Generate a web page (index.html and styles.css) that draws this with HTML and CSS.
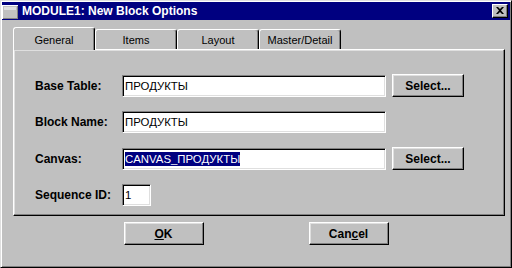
FILE: index.html
```html
<!DOCTYPE html>
<html lang="en">
<head>
    <meta charset="UTF-8">
    <title>MODULE1: New Block Options</title>
    <link rel="stylesheet" href="styles.css">
</head>
<body>
    <div class="window">
        <div class="titlebar">
            <svg class="app-icon" width="16" height="14" viewBox="0 0 16 14">
                <rect x="0" y="0" width="16" height="14" fill="#ffffff"/>
                <rect x="1" y="1" width="15" height="13" fill="#808080"/>
                <rect x="1" y="1" width="14" height="12" fill="#c0c0c0"/>
                <rect x="2" y="2" width="12" height="3" fill="#dfdfdf"/>
            </svg>
            <span class="title">MODULE1: New Block Options</span>
            <div class="close-btn">
                <svg width="8" height="7" viewBox="0 0 8 7">
                    <path d="M0 0h2l2 2 2-2h2L5 3.5 8 7H6L4 5 2 7H0l3-3.5z" fill="#000"/>
                </svg>
            </div>
        </div>

        <div class="tabs">
            <div class="tab active">General</div>
            <div class="tab">Items</div>
            <div class="tab">Layout</div>
            <div class="tab">Master/Detail</div>
        </div>

        <div class="panel">
            <div class="form">
                <div class="label">Base Table:</div>
                <div class="field">ПРОДУКТЫ</div>
                <div class="btn">Select...</div>

                <div class="label">Block Name:</div>
                <div class="field">ПРОДУКТЫ</div>
                <div></div>

                <div class="label">Canvas:</div>
                <div class="field"><span class="selected">CANVAS_ПРОДУКТЫ</span></div>
                <div class="btn">Select...</div>

                <div class="label">Sequence ID:</div>
                <div class="field short">1</div>
                <div></div>
            </div>
        </div>

        <div class="actions">
            <div class="btn wide"><u>O</u>K</div>
            <div class="btn wide">Can<u>c</u>el</div>
        </div>
    </div>
</body>
</html>
```

FILE: styles.css
```css
:root {
    --face: #c0c0c0;
    --light: #dfdfdf;
    --shadow: #808080;
    --navy: #000080;
}

body {
    margin: 0;
    font-family: 'Liberation Sans', Arial, sans-serif;
    background: var(--face);
}

.window {
    width: 512px;
    height: 268px;
    box-sizing: border-box;
    background: var(--face);
    border: 1px solid;
    border-color: var(--light) #000 #000 var(--light);
    box-shadow: inset 1px 1px #fff, inset -1px -1px var(--shadow);
    padding: 1px;
}

.titlebar {
    height: 18px;
    background: var(--navy);
    color: #fff;
    display: flex;
    align-items: center;
    padding: 0 2px 0 0;
}

.app-icon {
    display: block;
    margin-top: 1px;
}

.title {
    margin-left: 4px;
    font-weight: bold;
    font-size: 12px;
}

.close-btn {
    margin-left: auto;
    width: 16px;
    height: 14px;
    box-sizing: border-box;
    background: var(--face);
    border: 1px solid;
    border-color: #fff #000 #000 #fff;
    box-shadow: inset -1px -1px var(--shadow);
    display: flex;
    align-items: center;
    justify-content: center;
}

.close-btn svg {
    display: block;
    margin: 0 1px 1px 0;
}

/* tab strip */
.tabs {
    display: flex;
    align-items: flex-end;
    height: 22px;
    margin: 7px 0 0 11px;
}

.tab {
    width: 82px;
    height: 20px;
    box-sizing: border-box;
    border: 1px solid;
    border-bottom: none;
    border-color: #fff #000 transparent #fff;
    border-radius: 3px 3px 0 0;
    box-shadow: inset -1px 0 var(--shadow);
    font-size: 11px;
    display: flex;
    align-items: center;
    justify-content: center;
    padding-top: 1px;
}

.tab.active {
    height: 23px;
    margin-bottom: -1px;
    position: relative;
    z-index: 1;
    background: var(--face);
}

.panel {
    width: 492px;
    height: 167px;
    box-sizing: border-box;
    margin-left: 11px;
    border: 1px solid;
    border-color: #fff #000 #000 #fff;
    box-shadow: inset -1px -1px var(--shadow), inset 1px 1px var(--light);
    padding: 24px 0 0 21px;
}

.form {
    display: grid;
    grid-template-columns: 81px 264px 72px;
    column-gap: 6px;
    row-gap: 14px;
    align-items: center;
}

.label {
    font-weight: bold;
    font-size: 12px;
}

.field {
    height: 22px;
    box-sizing: border-box;
    background: #fff;
    border: 1px solid;
    border-color: var(--shadow) #fff #fff var(--shadow);
    box-shadow: inset 1px 1px #000, inset -1px -1px var(--light);
    font-size: 11.4px;
    padding-left: 2px;
    display: flex;
    align-items: center;
}

.field.short {
    width: 29px;
}

.selected {
    background: var(--navy);
    color: #fff;
    padding: 1px 0;
}

.btn {
    height: 23px;
    box-sizing: border-box;
    background: var(--face);
    border: 1px solid;
    border-color: #fff #000 #000 #fff;
    box-shadow: inset -1px -1px var(--shadow), inset 1px 1px var(--light);
    font-weight: bold;
    font-size: 12px;
    display: flex;
    align-items: center;
    justify-content: center;
}

.actions {
    display: flex;
    justify-content: center;
    gap: 105px;
    margin-top: 6px;
}

.btn.wide {
    width: 80px;
}
```
